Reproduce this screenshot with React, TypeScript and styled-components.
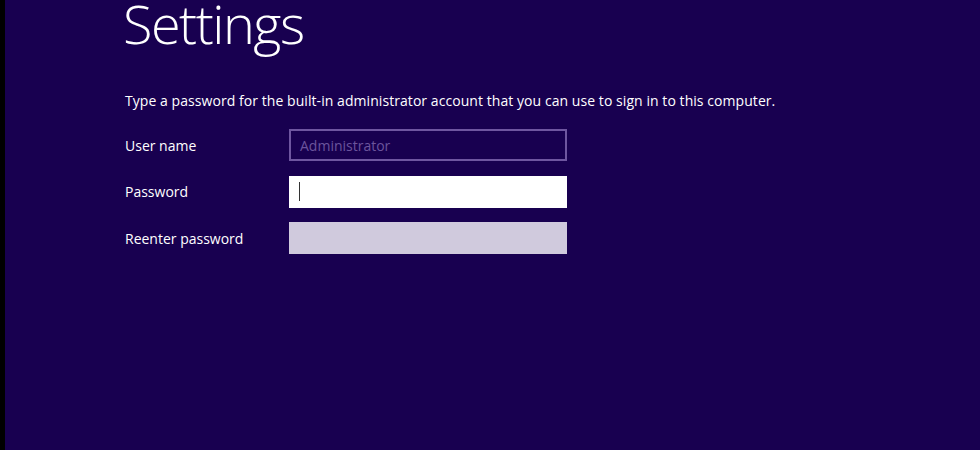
import React from 'react';
import styled, { createGlobalStyle } from 'styled-components';

const GlobalStyle = createGlobalStyle`
  html, body {
    margin: 0;
    padding: 0;
    background: #180050;
  }
  #root {
    height: 450px;
  }
`;

const Screen = styled.div`
  display: flex;
  width: 980px;
  height: 450px;
  overflow: hidden;
  font-family: 'Open Sans', 'Noto Sans', sans-serif;
  color: #ffffff;
`;

const EdgeStrip = styled.div`
  width: 5px;
  flex-shrink: 0;
  background: #000000;
`;

const Page = styled.div`
  flex: 1;
  background: #180050;
  padding-left: 120px;
`;

const Title = styled.h1`
  margin: 0 0 0 -2px;
  font-size: 54px;
  font-weight: 300;
  line-height: 46px;
  letter-spacing: -1.5px;
`;

const Intro = styled.p`
  margin: 45px 0 0;
  font-size: 14px;
  line-height: 20px;
  letter-spacing: 0.06px;
`;

const Form = styled.div`
  display: grid;
  grid-template-columns: 164px 278px;
  grid-auto-rows: 32px;
  row-gap: 14.5px;
  align-items: center;
  margin-top: 18px;
`;

const Label = styled.label`
  font-size: 14px;
`;

type FieldProps = { $variant: 'disabled' | 'active' | 'locked' };

const Field = styled.div<FieldProps>`
  box-sizing: border-box;
  height: 32px;
  display: flex;
  align-items: center;
  padding-left: 9px;
  font-size: 14px;
  border: ${(p) => (p.$variant === 'disabled' ? '2px solid #6e56a0' : 'none')};
  background: ${(p) =>
    p.$variant === 'active' ? '#ffffff' : p.$variant === 'locked' ? '#d0cadd' : 'transparent'};
  color: #6b549c;
`;

const Caret = styled.span`
  width: 1px;
  height: 19px;
  margin-left: 1px;
  background: #333333;
`;

export default function App() {
  return (
    <>
      <GlobalStyle />
      <Screen>
        <EdgeStrip />
        <Page>
          <Title>Settings</Title>
          <Intro>
            Type a password for the built-in administrator account that you can use to sign in to
            this computer.
          </Intro>
          <Form>
            <Label>User name</Label>
            <Field $variant="disabled">Administrator</Field>
            <Label>Password</Label>
            <Field $variant="active">
              <Caret />
            </Field>
            <Label>Reenter password</Label>
            <Field $variant="locked" />
          </Form>
        </Page>
      </Screen>
    </>
  );
}
